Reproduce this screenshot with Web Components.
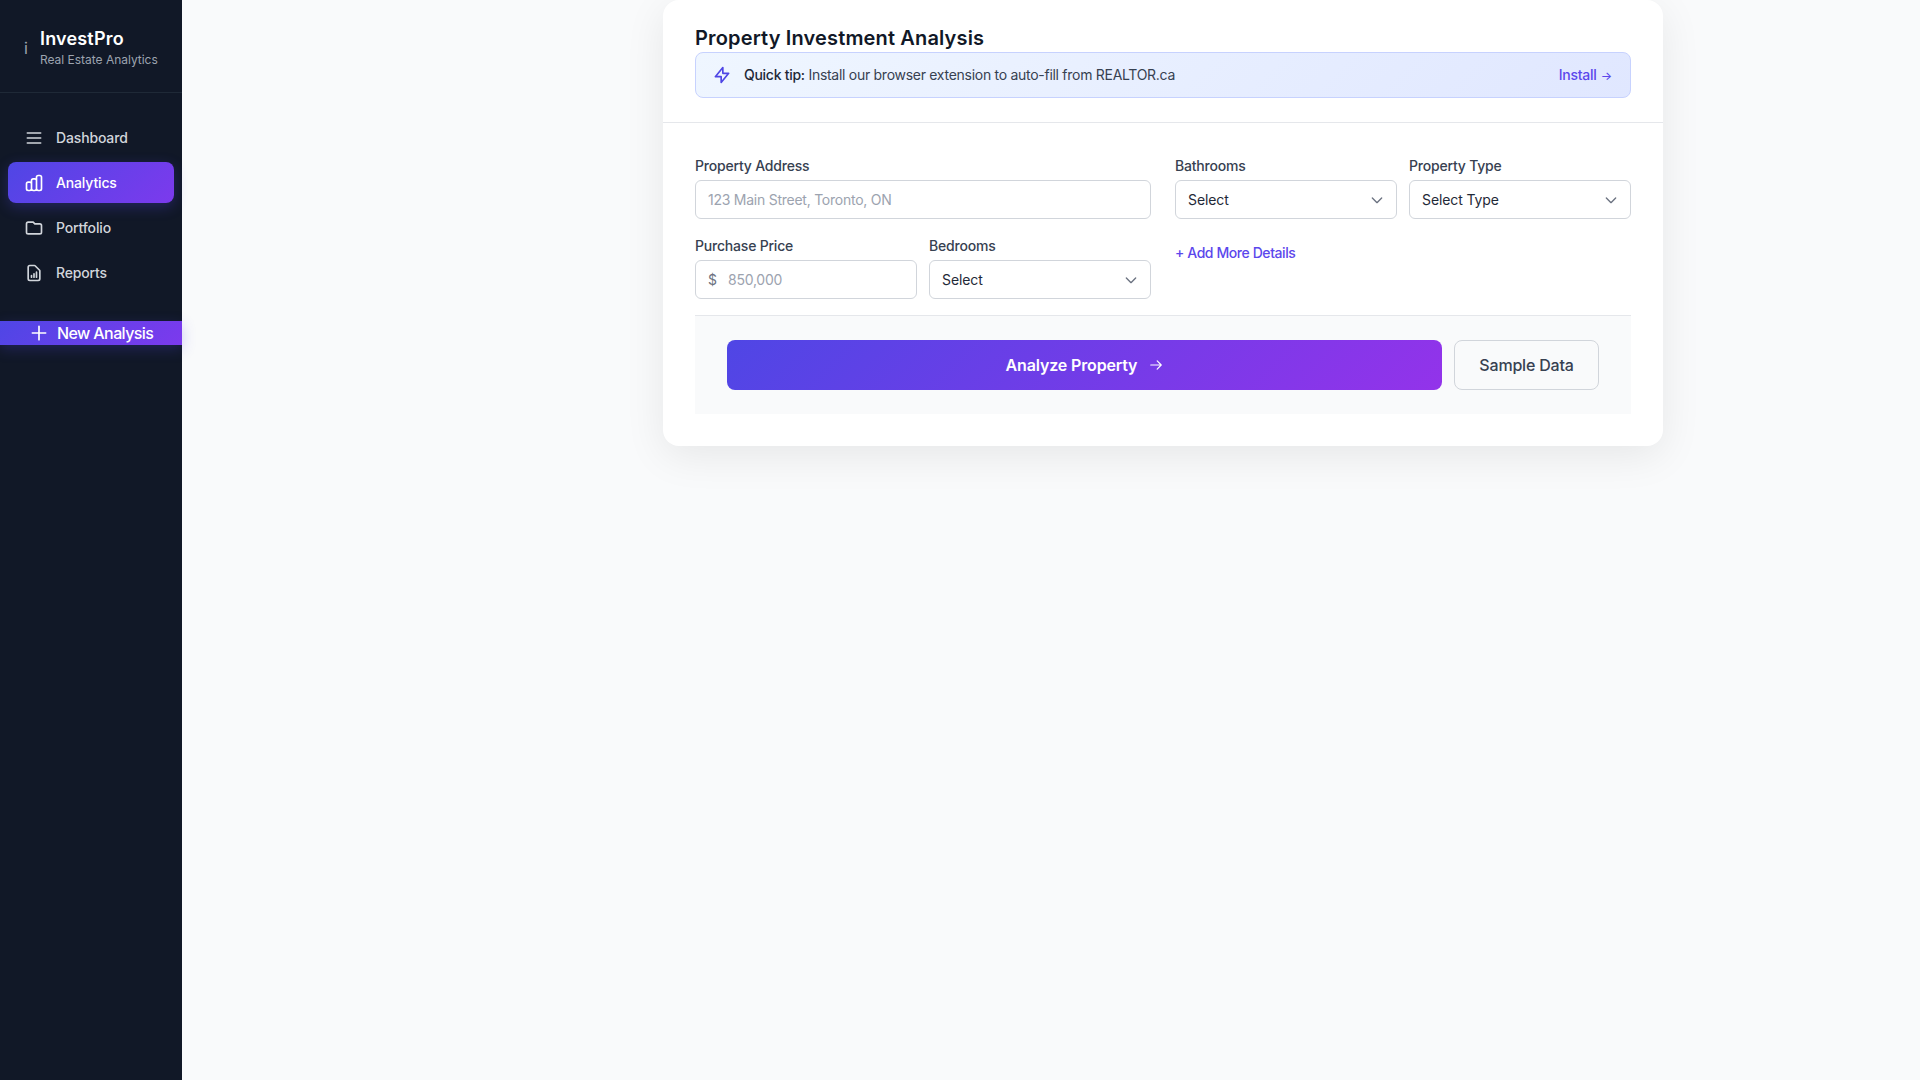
<!DOCTYPE html>
<html lang="en"><head><meta charset="utf-8"><title>InvestPro</title>
<style>
html,body{margin:0;height:100%}
body{background:#f9fafb;font-family:Inter,"Noto Sans",sans-serif;color:#111827;overflow:hidden}
</style></head><body>
<invest-app></invest-app>
<script>
const icons={
menu:'<path d="M4 6h16M4 12h16M4 18h16"/>',
chart:'<path d="M9 19v-6a2 2 0 00-2-2H5a2 2 0 00-2 2v6a2 2 0 002 2h2a2 2 0 002-2zm0 0V9a2 2 0 012-2h2a2 2 0 012 2v10m-6 0a2 2 0 002 2h2a2 2 0 002-2m0 0V5a2 2 0 012-2h2a2 2 0 012 2v14a2 2 0 01-2 2h-2a2 2 0 01-2-2z"/>',
folder:'<path d="M3 7v10a2 2 0 002 2h14a2 2 0 002-2V9a2 2 0 00-2-2h-6l-2-2H5a2 2 0 00-2 2z"/>',
report:'<path d="M9 17v-2m3 2v-4m3 4v-6m2 10H7a2 2 0 01-2-2V5a2 2 0 012-2h5.586a1 1 0 01.707.293l5.414 5.414a1 1 0 01.293.707V19a2 2 0 01-2 2z"/>',
bolt:'<path d="M13 10V3L4 14h7v7l9-11h-7z"/>',
plus:'<path d="M12 4v16m8-8H4"/>',
arrow:'<path d="M14 5l7 7m0 0l-7 7m7-7H3"/>',
chevron:'<path d="M19 9l-7 7-7-7"/>'};
function define(name,css,html){
  customElements.define(name,class extends HTMLElement{
    connectedCallback(){
      if(this.shadowRoot)return;
      const r=this.attachShadow({mode:'open'});
      r.innerHTML='<style>'+css+'</style>'+(typeof html==='function'?html(this):html);
    }
  });
}
define('app-icon',':host{display:inline-flex;flex:none}svg{display:block;width:100%;height:100%;fill:none;stroke:currentColor;stroke-linecap:round;stroke-linejoin:round}',
  h=>`<svg viewBox="0 0 24 24" stroke-width="${h.getAttribute('w')||2}">${icons[h.getAttribute('name')]}</svg>`);
define('nav-item',`:host{display:flex;align-items:center;height:41px;padding:0 16px;gap:12px;border-radius:8px;color:#d1d5db;font-size:14px;font-weight:500;letter-spacing:-.15px}
:host([active]){color:#fff;background:linear-gradient(135deg,#4f46e5,#7c3aed);box-shadow:0 4px 14px rgba(79,70,229,.3)}
app-icon{width:20px;height:20px}`,
  h=>`<app-icon name="${h.getAttribute('icon')}"></app-icon><slot></slot>`);
define('app-sidebar',`:host{display:block;flex:none;width:182px;height:100vh;background:#111827;box-sizing:border-box}
.brand{display:flex;align-items:center;height:92px;border-bottom:1px solid #1f2937;padding-left:24px;gap:12px}
.i{color:#9ca3af;font-size:16px;width:4px;margin-top:3px}
.b{padding-top:4px}
.name{font-size:18px;font-weight:600;color:#fff;line-height:24px;letter-spacing:.18px}
.sub{font-size:12px;color:#9ca3af;line-height:18px;letter-spacing:-.02px;white-space:nowrap}
nav{display:flex;flex-direction:column;gap:4px;padding:24px 8px 0}
.new{display:flex;align-items:center;height:24px;margin-top:28px;padding-left:29px;gap:8px;color:#fff;font-size:16px;font-weight:500;letter-spacing:-.6px;background:linear-gradient(135deg,#4f46e5,#7c3aed);box-shadow:0 4px 14px rgba(79,70,229,.25)}
.new app-icon{width:20px;height:20px}`,
`<div class="brand"><span class="i">i</span><div class="b"><div class="name">InvestPro</div><div class="sub">Real Estate Analytics</div></div></div>
<nav><nav-item icon="menu">Dashboard</nav-item><nav-item icon="chart" active>Analytics</nav-item><nav-item icon="folder">Portfolio</nav-item><nav-item icon="report">Reports</nav-item></nav>
<div class="new"><app-icon name="plus"></app-icon><span>New Analysis</span></div>`);
define('tip-banner',`:host{display:flex;align-items:center;height:46px;box-sizing:border-box;padding:0 18px 1px 16px;border:1px solid #c7d2fe;border-radius:8px;background:linear-gradient(135deg,#eff6ff,#e0e7ff);font-size:14px;color:#374151;letter-spacing:-.28px}
app-icon{width:20px;height:20px;color:#4f46e5;margin-right:12px;margin-top:1px}
b{font-weight:500;color:#1f2937}
.t{flex:1}
.l{color:#5b47ec;font-weight:500}
.a{font-size:12px;margin-left:1px}`,
`<app-icon name="bolt"></app-icon><span class="t"><b>Quick tip:</b> Install our browser extension to auto-fill from REALTOR.ca</span><span class="l">Install <span class="a">→</span></span>`);
define('form-field',`:host{display:flex;flex-direction:column;gap:4px;min-width:0}
label{font-size:14px;line-height:20px;font-weight:500;color:#374151;letter-spacing:-.2px}`,
 h=>`<label>${h.getAttribute('label')}</label><slot></slot>`);
define('text-box',`:host{display:flex;align-items:center;height:39px;box-sizing:border-box;border:1px solid #d1d5db;border-radius:6px;background:#fff;padding:0 12px;font-size:14px;color:#9ca3af;letter-spacing:-.25px}
.p{color:#6b7280;width:20px}`,
 h=>(h.getAttribute('prefix')?`<span class="p">${h.getAttribute('prefix')}</span>`:'')+`<span><slot></slot></span>`);
define('select-box',`:host{display:flex;align-items:center;justify-content:space-between;height:39px;box-sizing:border-box;border:1px solid #d1d5db;border-radius:6px;background:#fff;padding:0 11px 0 12px;font-size:14px;color:#1f2937;letter-spacing:-.1px}
app-icon{width:16px;height:16px;color:#6b7280}`,
`<slot></slot><app-icon name="chevron"></app-icon>`);
define('action-bar',`:host{display:flex;gap:12px;padding:24px 32px;background:#f9fafb;border-top:1px solid #e5e7eb}
.go{flex:1;height:50px;box-sizing:border-box;border-radius:8px;background:linear-gradient(135deg,#4f46e5,#9333ea);color:#fff;font-size:16px;font-weight:600;letter-spacing:-.15px;display:flex;align-items:center;justify-content:center;gap:12px}
.go app-icon{width:14px;height:14px}
.sm{width:145px;height:50px;box-sizing:border-box;border:1px solid #d1d5db;border-radius:8px;color:#374151;font-size:16px;font-weight:500;letter-spacing:-.2px;display:flex;align-items:center;justify-content:center}`,
`<div class="go"><span>Analyze Property</span><app-icon name="arrow"></app-icon></div><div class="sm">Sample Data</div>`);
define('analysis-card',`:host{display:block;width:1000px;height:446px;box-sizing:border-box;background:#fff;border-radius:16px;box-shadow:0 10px 40px rgba(0,0,0,.08)}
header{padding:24px 32px;border-bottom:1px solid #e5e7eb}
h2{margin:0;font-size:20px;line-height:28px;font-weight:600;color:#111827;letter-spacing:.15px}
.form{padding:33px 32px 0}
.cols{display:grid;grid-template-columns:1fr 1fr;gap:24px}
.g{display:grid;grid-template-columns:1fr 1fr;gap:17px 12px;align-content:start}
.w{grid-column:span 2}
.more{font-size:14px;line-height:20px;font-weight:500;color:#5b47ec;letter-spacing:-.42px;padding-top:7px;grid-column:span 2}
action-bar{margin-top:16px}`,
`<header><h2>Property Investment Analysis</h2><tip-banner></tip-banner></header>
<div class="form"><div class="cols">
<div class="g"><form-field class="w" label="Property Address"><text-box>123 Main Street, Toronto, ON</text-box></form-field>
<form-field label="Purchase Price"><text-box prefix="$">850,000</text-box></form-field>
<form-field label="Bedrooms"><select-box>Select</select-box></form-field></div>
<div class="g"><form-field label="Bathrooms"><select-box>Select</select-box></form-field>
<form-field label="Property Type"><select-box>Select Type</select-box></form-field>
<div class="more">+ Add More Details</div></div>
</div><action-bar></action-bar></div>`);
define('invest-app',`:host{display:flex;height:100vh}
main{flex:1;padding-left:481px}`,
`<app-sidebar></app-sidebar><main><analysis-card></analysis-card></main>`);
</script>
</body></html>
